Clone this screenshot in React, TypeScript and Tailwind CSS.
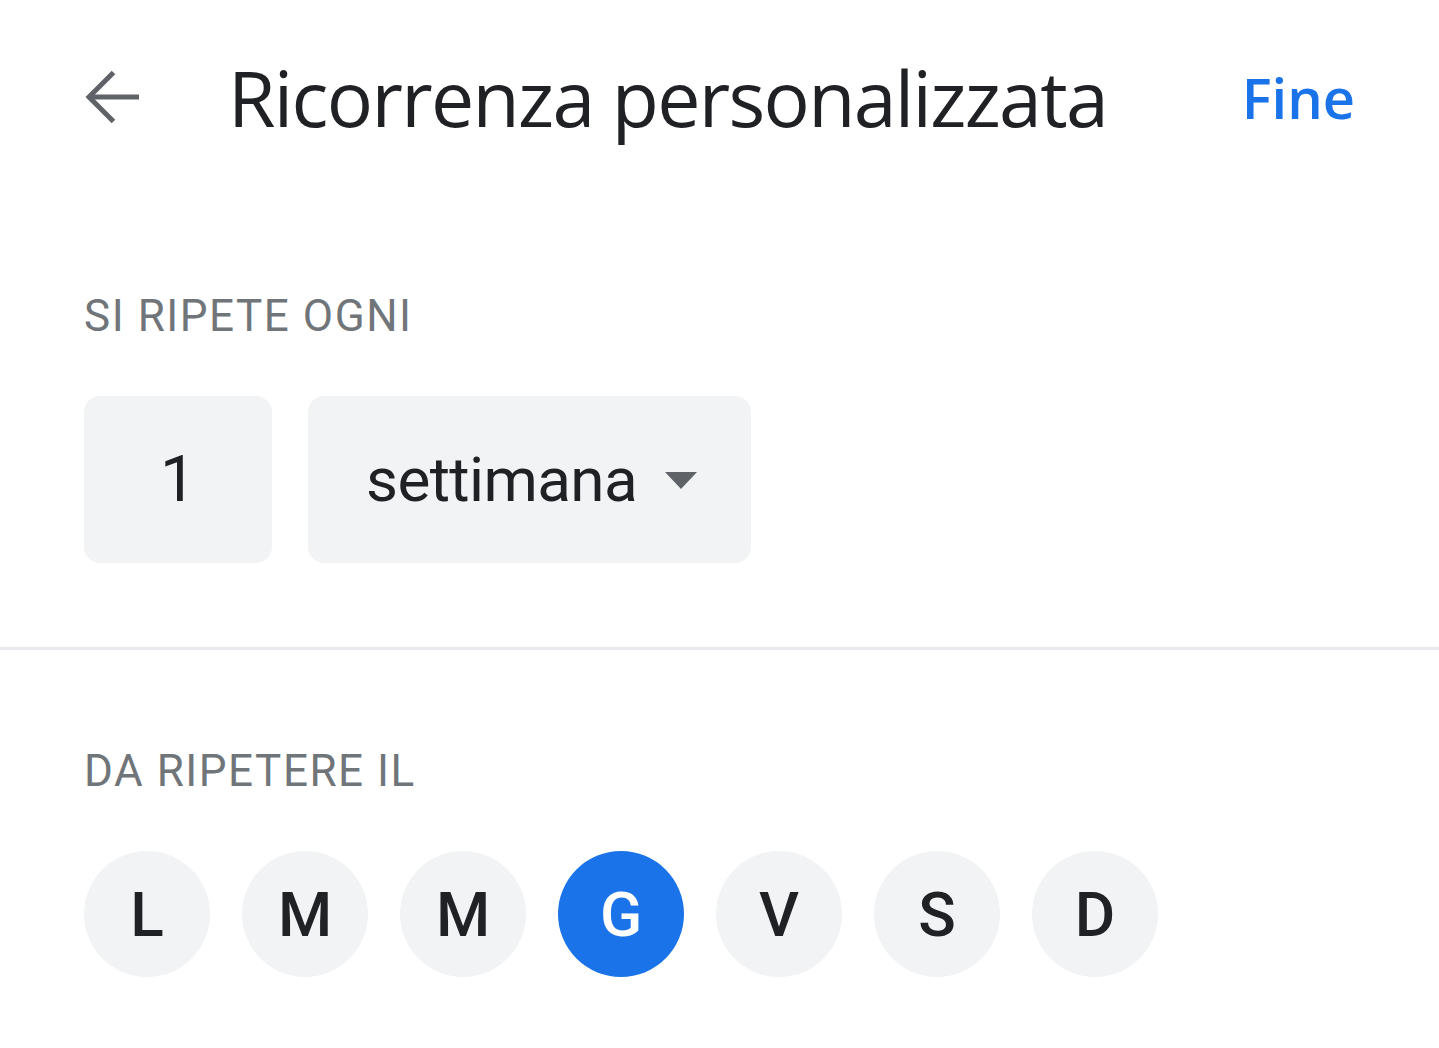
const days = [
  { label: "L", selected: false },
  { label: "M", selected: false },
  { label: "M", selected: false },
  { label: "G", selected: true },
  { label: "V", selected: false },
  { label: "S", selected: false },
  { label: "D", selected: false },
];

function BackArrow() {
  return (
    <svg width="56" height="56" viewBox="0 0 56 56" fill="none" className="shrink-0">
      <path d="M55 28H5" stroke="#5f6368" strokeWidth="5" />
      <path d="M29.5 3.5L5 28l24.5 24.5" stroke="#5f6368" strokeWidth="5" />
    </svg>
  );
}

export default function App() {
  return (
    <div className="min-h-screen w-full bg-white font-['Roboto',sans-serif]">
      {/* Header */}
      <header className="flex h-[194px] items-center pl-[84px] pr-[84px]">
        <BackArrow />
        <h1 className="ml-[88px] flex-1 font-['Open_Sans',sans-serif] text-[77px] font-medium leading-none tracking-[-0.022em] text-[#202124]">
          Ricorrenza personalizzata
        </h1>
        <button className="font-['Open_Sans',sans-serif] text-[56px] font-semibold leading-none text-[#1a73e8]">
          Fine
        </button>
      </header>

      {/* Frequency */}
      <section className="px-[84px] pt-[100px] pb-[84px]">
        <div className="text-[44px] leading-none tracking-[0.035em] text-[#70757a]">SI RIPETE OGNI</div>
        <div className="mt-[58px] flex gap-[36px]">
          <div className="flex h-[167px] w-[188px] items-center justify-center rounded-[16px] bg-[#f1f3f4] text-[64px] text-[#202124]">
            1
          </div>
          <div className="flex h-[167px] w-[443px] items-center rounded-[16px] bg-[#f1f3f4] pl-[58px]">
            <span className="text-[62px] leading-none tracking-[-0.01em] text-[#202124]">settimana</span>
            <svg width="32" height="17" viewBox="0 0 32 17" className="ml-[28px] mt-[2px]">
              <path d="M0 0h32L16 17z" fill="#5f6368" />
            </svg>
          </div>
        </div>
      </section>

      <div className="h-[3px] w-full bg-[#e8eaed]" />

      {/* Days */}
      <section className="px-[84px] pt-[99px]">
        <div className="text-[44px] leading-none tracking-[0.035em] text-[#70757a]">DA RIPETERE IL</div>
        <div className="mt-[58px] flex gap-[32px]">
          {days.map((d, i) => (
            <div
              key={i}
              className={
                d.selected
                  ? "flex h-[126px] w-[126px] items-center justify-center rounded-full bg-[#1a73e8] text-[62px] font-medium text-white"
                  : "flex h-[126px] w-[126px] items-center justify-center rounded-full bg-[#f1f3f4] text-[62px] font-medium text-[#202124]"
              }
            >
              {d.label}
            </div>
          ))}
        </div>
      </section>
    </div>
  );
}
